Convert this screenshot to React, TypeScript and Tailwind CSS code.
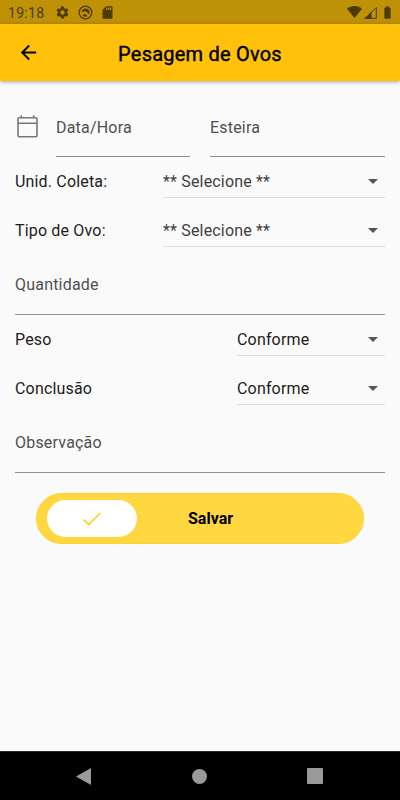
import { MdArrowBack, MdBatteryFull, MdSdCard, MdSettings } from 'react-icons/md';

const fonte = 'font-[Roboto,sans-serif]';

function StatusBar() {
  return (
    <div className="h-6 bg-[#bf9106] text-[#4c3a02] flex items-center justify-between pl-2 pr-[5px]">
      <div className="flex items-center">
        <span className="w-[47px] text-[14px] leading-6 tracking-[0.3px] pt-[2px]">19:18</span>
        <MdSettings className="w-[15px] h-[15px]" />
        <svg className="w-[15px] h-[15px] ml-2" viewBox="0 0 15 15" fill="none">
          <circle cx="7.500" cy="7.500" r="6.300" stroke="currentColor" strokeWidth="1.300" />
          <path d="M3.500 7a4.200 4.200 0 0 1 7.400-2c.9 1.300 1.100 3 .3 4.400L8.600 6.900 6.900 6 5 7z" fill="currentColor" />
          <path d="M4.500 10.200l2.300-1.400 2.800 2.300a4 4 0 0 1-5.100-.9z" fill="currentColor" />
        </svg>
        <MdSdCard className="w-[15px] h-[15px] ml-[7px]" />
      </div>
      <div className="flex items-center">
        <svg className="w-[15px] h-3" viewBox="0 0 15 12">
          <path d="M7.500 12L0 2.700C2 1 4.600 0 7.500 0s5.500 1 7.500 2.700z" fill="currentColor" />
        </svg>
        <svg className="w-[13px] h-[13px] ml-[2px] mr-[3px]" viewBox="0 0 13 13" fill="none">
          <path d="M1.500 12.300L12.300 1.500v10.800z" stroke="currentColor" />
          <path d="M0 13L7.500 5.500V13z" fill="currentColor" />
        </svg>
        <MdBatteryFull className="w-[15px] h-[15px]" />
      </div>
    </div>
  );
}

function AppBar() {
  return (
    <header className="h-[57px] bg-[#ffc10a] flex items-center px-[19px] shadow-[0_1px_4px_rgba(0,0,0,0.35)]">
      <MdArrowBack className="w-[23px] h-[23px] -ml-[2px]" />
      <h1 className="flex-1 text-center text-[20px] leading-6 font-normal tracking-[0.22px] pr-[21px] pt-[2px] [-webkit-text-stroke:0.4px_black]">
        Pesagem de Ovos
      </h1>
    </header>
  );
}

function Campo({ label, className }: { label: string; className: string }) {
  return (
    <div className={`border-b border-[#8f8f8f] text-[#505050] text-[16px] leading-5 tracking-[0.2px] ${className}`}>
      {label}
    </div>
  );
}

type SelecaoProps = { label: string; valor: string; largura: string; cor: string };

function Selecao({ label, valor, largura, cor }: SelecaoProps) {
  return (
    <div className="h-[49px] flex justify-between text-[16px] leading-5 tracking-[0.17px]">
      <span className="pt-[15px] text-[#1c1c1c]">{label}</span>
      <div className={`h-[41px] pt-[15px] pr-[7px] border-b border-[#dcdcdc] flex justify-between ${largura} ${cor}`}>
        <span>{valor}</span>
        <svg className="w-[10px] h-[5px] mt-[7px]" viewBox="0 0 10 5">
          <path d="M0 0h10L5 5z" fill="#555555" />
        </svg>
      </div>
    </div>
  );
}

function BotaoSalvar() {
  return (
    <button className="mt-5 mx-[21px] w-[328px] h-[51px] rounded-full bg-[#ffd740] border border-[#ffd12a] flex items-center pl-[10px]">
      <span className="w-[90px] h-[37px] rounded-full bg-white flex items-center justify-center">
        <svg className="w-[18px] h-[14px]" viewBox="0 0 18 14" fill="none">
          <path d="M.7 7.600l5 5L17.300 1" stroke="#ffd022" strokeWidth="1.700" />
        </svg>
      </span>
      <span className="ml-[51px] text-[16px] leading-5 font-bold text-black">Salvar</span>
    </button>
  );
}

function NavBar() {
  return (
    <nav className="h-[49px] bg-black border-t border-[#2a2a2a] flex items-center justify-between pl-[76px] pr-[77px]">
      <svg className="w-[15px] h-[17px]" viewBox="0 0 15 17">
        <path d="M0 8.500L15 0v17z" fill="#9a9a9a" />
      </svg>
      <span className="w-[15px] h-[15px] rounded-full bg-[#9a9a9a]" />
      <span className="w-4 h-4 rounded-[1px] bg-[#9a9a9a]" />
    </nav>
  );
}

export default function App() {
  return (
    <div className={`w-[400px] h-[800px] flex flex-col bg-[#fafafa] text-black ${fonte}`}>
      <StatusBar />
      <AppBar />
      <main className="flex-1 px-[15px]">
        <div className="h-[76px] flex">
          <svg className="w-[21px] h-[23px] mt-[34px] ml-[2px] mr-[18px]" viewBox="0 0 21 23" fill="none" stroke="#777777" strokeWidth="1.600">
            <rect x="1" y="2.700" width="19" height="19" rx="1.200" />
            <path d="M1 8.300h19M4.300.3v2.400M16.700.3v2.400" />
          </svg>
          <Campo label="Data/Hora" className="w-[134px] pt-[37px]" />
          <Campo label="Esteira" className="w-[175px] pt-[37px] ml-5" />
        </div>
        <Selecao label="Unid. Coleta:" valor="** Selecione **" largura="w-[222px]" cor="text-[#404040]" />
        <Selecao label="Tipo de Ovo:" valor="** Selecione **" largura="w-[222px]" cor="text-[#404040]" />
        <Campo label="Quantidade" className="h-[60px] pt-5" />
        <Selecao label="Peso" valor="Conforme" largura="w-[148px]" cor="text-[#1c1c1c]" />
        <Selecao label="Conclusão" valor="Conforme" largura="w-[148px]" cor="text-[#1c1c1c]" />
        <Campo label="Observação" className="h-[60px] pt-5" />
        <BotaoSalvar />
      </main>
      <NavBar />
    </div>
  );
}
